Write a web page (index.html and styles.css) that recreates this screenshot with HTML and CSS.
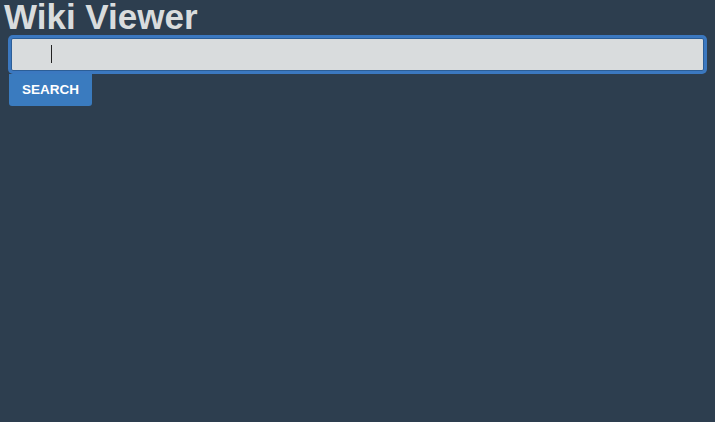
FILE: index.html
```html
<!DOCTYPE html>
<html>
<head>
<meta charset="utf-8">
<link rel="stylesheet" href="styles.css">
</head>
<body>
<div class="app">
  <h1 class="title">Wiki Viewer</h1>
  <form class="search">
    <div class="field">
      <input class="search-input" type="text">
      <span class="caret"></span>
    </div>
    <button class="search-btn" type="button">SEARCH</button>
  </form>
</div>
</body>
</html>
```
FILE: styles.css
```css
html, body {
  margin: 0;
  padding: 0;
  background: #2d3e4f;
  height: 100%;
}
.app {
  font-family: "Liberation Sans", Arial, sans-serif;
  padding: 0 8px;
}
.title {
  margin: -3px 0 0 -4px;
  font-size: 35px;
  line-height: 40px;
  font-weight: bold;
  color: #d9dcdd;
}
.search {
  display: flex;
  flex-direction: column;
  align-items: flex-start;
  margin-top: 1px;
}
.field {
  position: relative;
  box-sizing: border-box;
  width: calc(100% - 6px);
  margin: 0 0 3px 3px;
}
.search-input {
  box-sizing: border-box;
  display: block;
  width: 100%;
  height: 33px;
  padding: 0 40px;
  border: 1px solid #2c5e97;
  border-radius: 2px;
  background: #d9dcdd;
  box-shadow: 0 0 0 3px #3b78c0;
  outline: none;
  font-size: 16px;
  color: #222;
  caret-color: transparent;
}
.caret {
  position: absolute;
  left: 40px;
  top: 7px;
  width: 1px;
  height: 18px;
  background: #222;
}
.search-btn {
  box-sizing: border-box;
  margin-left: 1px;
  height: 32px;
  padding: 0 13px 2px;
  border: none;
  border-radius: 0 0 3px 3px;
  background: #3a7bbf;
  color: #fff;
  font-family: "Liberation Sans", Arial, sans-serif;
  font-size: 13.5px;
  font-weight: bold;
}
```
